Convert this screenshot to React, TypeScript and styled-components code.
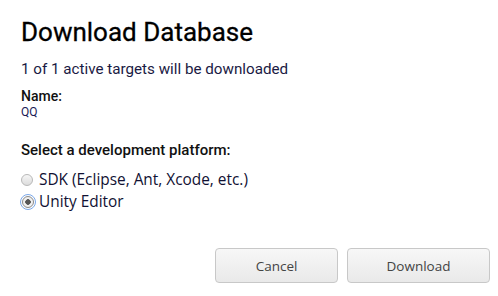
import * as React from 'react';
import styled, { createGlobalStyle } from 'styled-components';

const GlobalStyle = createGlobalStyle`
    html, body {
        margin: 0;
        padding: 0;
        background: #ffffff;
    }
`;

const Dialog = styled.div`
    box-sizing: border-box;
    width: 498px;
    height: 296px;
    padding: 15px 8px 13px 21px;
    display: flex;
    flex-direction: column;
    font-family: Roboto, 'Liberation Sans', sans-serif;
`;

const Title = styled.h1`
    margin: 0;
    font-family: Roboto, sans-serif;
    font-weight: 400;
    font-size: 26px;
    line-height: 34px;
    color: #000000;
    -webkit-text-stroke: 0.3px #000000;
`;

const Summary = styled.p`
    margin: 11px 0 0;
    font-size: 15.2px;
    line-height: 18px;
    color: #1a1a44;
`;

const FieldLabel = styled.div`
    margin-top: 10px;
    font-size: 14px;
    font-weight: 500;
    line-height: 17px;
    color: #111111;
`;

const FieldValue = styled.div`
    font-size: 12px;
    line-height: 14px;
    color: #1a1a55;
`;

const SectionLabel = styled.div`
    margin-top: 22px;
    font-size: 15px;
    font-weight: 500;
    line-height: 18px;
    color: #111111;
`;

const Options = styled.div`
    margin-top: 11px;
    display: flex;
    flex-direction: column;
    gap: 2px;
`;

const Option = styled.label`
    display: flex;
    align-items: center;
    gap: 6px;
    font-family: 'Open Sans', sans-serif;
    font-size: 15.4px;
    line-height: 20px;
    color: #111133;
`;

const RadioDot = styled.span<{ checked?: boolean }>`
    box-sizing: border-box;
    width: 12px;
    height: 12px;
    border-radius: 50%;
    border: 1px solid ${props => props.checked ? '#8a8a8a' : '#b8b8b8'};
    background: ${props => props.checked
        ? 'radial-gradient(circle, #555 0 2.5px, #f0f0f0 3px)'
        : 'linear-gradient(#f6f6f6, #dcdcdc)'};
    outline: ${props => props.checked ? '1px solid #7aa7e8' : 'none'};
    outline-offset: 1px;
    margin-left: ${props => props.checked ? '1px' : '0'};
    margin-right: ${props => props.checked ? '-1px' : '0'};
`;

const Actions = styled.div`
    margin-top: auto;
    display: flex;
    justify-content: flex-end;
    gap: 9px;
`;

const Button = styled.button<{ wide?: boolean }>`
    box-sizing: border-box;
    width: ${props => props.wide ? 143 : 123}px;
    height: 35px;
    border: 1px solid #c8c8c8;
    border-radius: 4px;
    background: linear-gradient(#f7f7f7, #e9e9e9);
    font-family: 'Open Sans', sans-serif;
    font-size: 13.5px;
    color: #444444;
    cursor: pointer;
`;

function App(): React.ReactElement {
    return (
        <>
            <GlobalStyle />
            <Dialog>
                <Title>Download Database</Title>
                <Summary>1 of 1 active targets will be downloaded</Summary>
                <FieldLabel>Name:</FieldLabel>
                <FieldValue>QQ</FieldValue>
                <SectionLabel>Select a development platform:</SectionLabel>
                <Options>
                    <Option><RadioDot />SDK (Eclipse, Ant, Xcode, etc.)</Option>
                    <Option><RadioDot checked />Unity Editor</Option>
                </Options>
                <Actions>
                    <Button>Cancel</Button>
                    <Button wide>Download</Button>
                </Actions>
            </Dialog>
        </>
    );
}

export default App;
